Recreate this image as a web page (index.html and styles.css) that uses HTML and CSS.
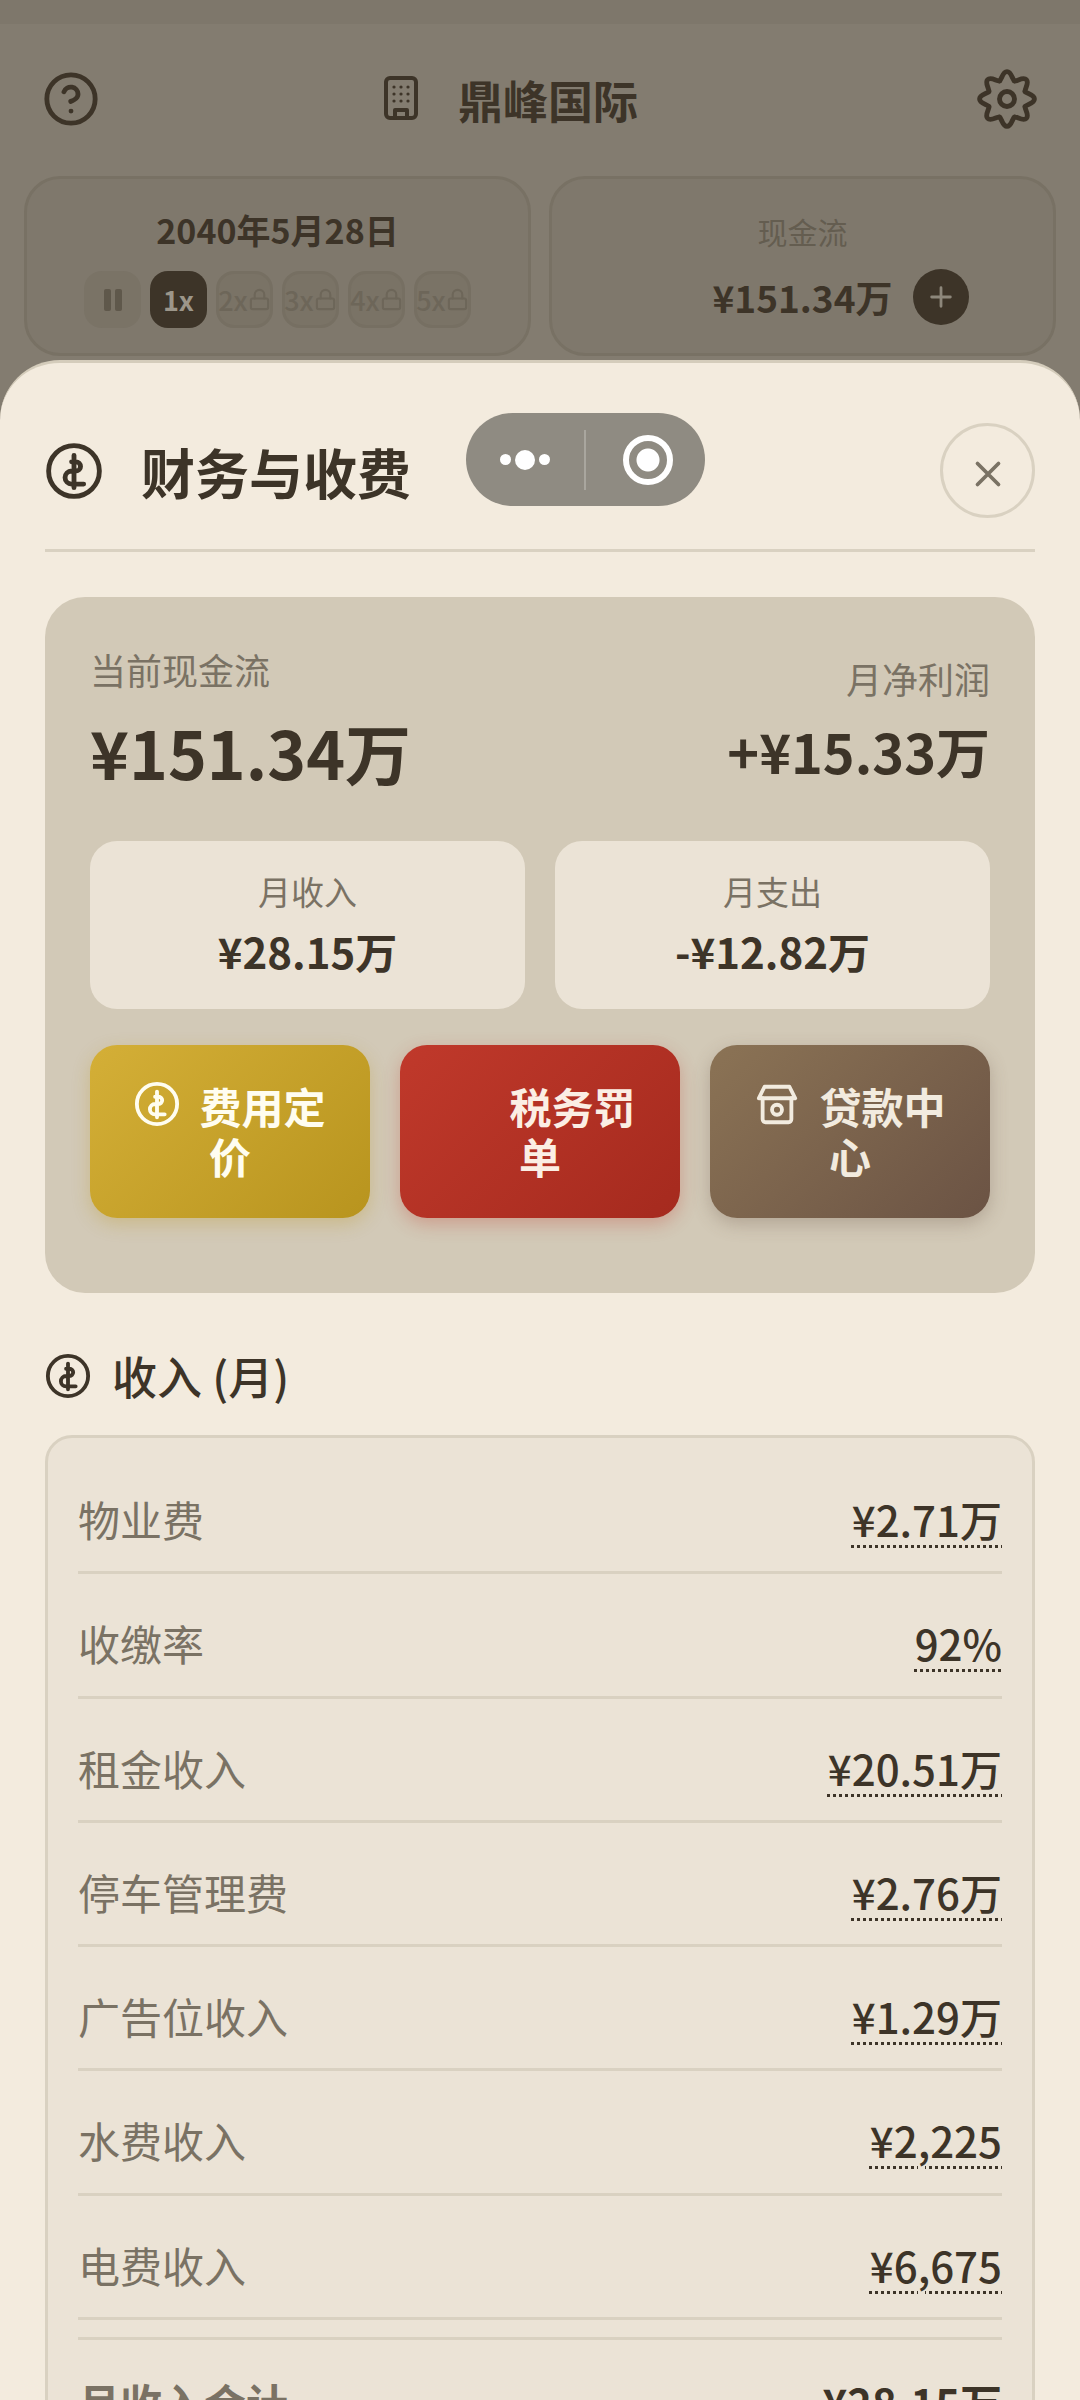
FILE: index.html
```html
<!DOCTYPE html>
<html lang="zh">
<head>
    <meta charset="UTF-8">
    <meta name="viewport" content="width=device-width, initial-scale=1.0">
    <title>鼎峰国际</title>
    <link rel="stylesheet" href="styles.css">
</head>
<body>
    <svg class="sprite" xmlns="http://www.w3.org/2000/svg">
        <symbol id="i-dollar" viewBox="0 0 24 24">
            <circle cx="12" cy="12" r="10.5"/>
            <path d="M12 5.5v13.4M11 8.2h1.8a1.9 1.9 0 0 1 0 3.8H11a2.7 2.7 0 0 0 0 5.4h5"/>
        </symbol>
        <symbol id="i-lock" viewBox="0 0 24 24">
            <rect x="3" y="11" width="18" height="11" rx="2"/>
            <path d="M7 11V7a5 5 0 0 1 10 0v4"/>
        </symbol>
        <path id="lobe" d="M9.09 4.98C9.92 4.64 10.2 1.4 12 1.4S14.08 4.64 14.91 4.98"/>
    </svg>

    <div class="statusbar"></div>

    <header class="topbar">
        <svg class="icon icon-help" viewBox="0 0 24 24">
            <circle cx="12" cy="12" r="10"/>
            <path d="M9.1 9a3 3 0 0 1 5.8 1c0 2-3 3-3 3M12 17h.01"/>
        </svg>
        <div class="topbar-title">
            <svg class="icon icon-building" viewBox="0 0 21 24">
                <rect x="3" y="2" width="15" height="20" rx="2"/>
                <path class="dots" d="M7 6.5h.01M10.5 6.5h.01M14 6.5h.01M7 10h.01M10.5 10h.01M14 10h.01M7 13.5h.01M10.5 13.5h.01M14 13.5h.01"/>
                <path d="M7.5 22v-4h6v4"/>
            </svg>
            <h1>鼎峰国际</h1>
        </div>
        <svg class="icon icon-gear" viewBox="0 0 24 24">
            <use href="#lobe"/>
            <use href="#lobe" transform="rotate(45 12 12)"/>
            <use href="#lobe" transform="rotate(90 12 12)"/>
            <use href="#lobe" transform="rotate(135 12 12)"/>
            <use href="#lobe" transform="rotate(180 12 12)"/>
            <use href="#lobe" transform="rotate(225 12 12)"/>
            <use href="#lobe" transform="rotate(270 12 12)"/>
            <use href="#lobe" transform="rotate(315 12 12)"/>
            <circle cx="12" cy="12" r="2.9"/>
        </svg>
    </header>

    <section class="top-cards">
        <div class="top-card">
            <div class="date">2040年5月28日</div>
            <div class="speeds">
                <div class="speed speed-pause"><span class="pause-bar"></span><span class="pause-bar"></span></div>
                <div class="speed speed-on">1x</div>
                <div class="speed speed-locked">2x<svg class="lock"><use href="#i-lock"/></svg></div>
                <div class="speed speed-locked">3x<svg class="lock"><use href="#i-lock"/></svg></div>
                <div class="speed speed-locked">4x<svg class="lock"><use href="#i-lock"/></svg></div>
                <div class="speed speed-locked">5x<svg class="lock"><use href="#i-lock"/></svg></div>
            </div>
        </div>
        <div class="top-card">
            <div class="cash-label">现金流</div>
            <div class="cash-row">
                <span class="cash-value">¥151.34万</span>
                <span class="cash-add"><svg viewBox="0 0 24 24"><path d="M12 4v16M4 12h16"/></svg></span>
            </div>
        </div>
    </section>

    <div class="sheet">
        <div class="sheet-head">
            <svg class="icon icon-dollar"><use href="#i-dollar"/></svg>
            <h2>财务与收费</h2>
            <div class="close">
                <svg viewBox="0 0 24 24"><path d="M3 3l18 18M21 3L3 21"/></svg>
            </div>
        </div>

        <div class="stats">
            <div class="stats-top">
                <div>
                    <div class="stats-label">当前现金流</div>
                    <div class="stats-cash">¥151.34万</div>
                </div>
                <div class="stats-right">
                    <div class="stats-label">月净利润</div>
                    <div class="stats-profit">+¥15.33万</div>
                </div>
            </div>
            <div class="minis">
                <div class="mini">
                    <div class="mini-label">月收入</div>
                    <div class="mini-value">¥28.15万</div>
                </div>
                <div class="mini">
                    <div class="mini-label">月支出</div>
                    <div class="mini-value">-¥12.82万</div>
                </div>
            </div>
            <div class="actions">
                <div class="action action-gold"><svg class="action-icon"><use href="#i-dollar"/></svg>费用定价</div>
                <div class="action action-red"><span class="action-icon"></span>税务罚单</div>
                <div class="action action-brown"><svg class="action-icon" viewBox="0 0 24 24">
                    <path d="M5.5 3h13l3 6h-19z"/>
                    <path d="M4.5 9v11a1.5 1.5 0 0 0 1.5 1.5h12a1.5 1.5 0 0 0 1.5-1.5V9"/>
                    <circle cx="12" cy="15" r="2.6"/>
                </svg>贷款中心</div>
            </div>
        </div>

        <div class="section-title">
            <svg class="icon icon-section"><use href="#i-dollar"/></svg>
            <h3>收入 (月)</h3>
        </div>

        <div class="list">
            <div class="row"><span class="row-label">物业费</span><span class="row-value">¥2.71万</span></div>
            <div class="row"><span class="row-label">收缴率</span><span class="row-value">92%</span></div>
            <div class="row"><span class="row-label">租金收入</span><span class="row-value">¥20.51万</span></div>
            <div class="row"><span class="row-label">停车管理费</span><span class="row-value">¥2.76万</span></div>
            <div class="row"><span class="row-label">广告位收入</span><span class="row-value">¥1.29万</span></div>
            <div class="row"><span class="row-label">水费收入</span><span class="row-value">¥2,225</span></div>
            <div class="row"><span class="row-label">电费收入</span><span class="row-value">¥6,675</span></div>
            <div class="row row-total"><span class="row-label">月收入合计</span><span class="row-value">¥28.15万</span></div>
        </div>
    </div>

    <!-- 小程序胶囊按钮 -->
    <div class="capsule">
        <div class="capsule-dots"><span></span><span class="big"></span><span></span></div>
        <div class="capsule-line"></div>
        <div class="capsule-ring"></div>
    </div>
</body>
</html>
```

FILE: styles.css
```css
* {
    box-sizing: border-box;
}
html, body {
    margin: 0;
    height: 2400px;
    overflow: hidden;
}
body {
    position: relative;
    background: #837c70;
    color: #3d3428;
    font-family: "Noto Sans CJK SC", "Noto Sans", sans-serif;
}
h1, h2, h3 {
    margin: 0;
}
.sprite {
    display: none;
}
.icon {
    display: block;
    flex: none;
}
svg {
    fill: none;
    stroke: currentColor;
    stroke-width: 2;
    stroke-linecap: round;
    stroke-linejoin: round;
}

/* 背景页面 */
.statusbar {
    height: 24px;
    background: #7e776b;
}
.topbar {
    height: 152px;
    padding: 0 42px;
    display: flex;
    align-items: center;
    justify-content: space-between;
}
.icon-help {
    width: 58px;
    height: 58px;
    margin-top: -2px;
}
.icon-gear {
    width: 62px;
    height: 62px;
    stroke-width: 1.9;
    margin-top: -2px;
}
.topbar-title {
    display: flex;
    align-items: center;
    gap: 36px;
    padding-right: 58px;
}
.topbar-title h1 {
    font-size: 45px;
    line-height: 60px;
    font-weight: 700;
}
.icon-building {
    width: 42px;
    height: 48px;
    margin-top: -4px;
}
.icon-building .dots {
    stroke-width: 1.6;
}
.top-cards {
    display: flex;
    gap: 18px;
    padding: 0 24px;
}
.top-card {
    flex: 1;
    height: 180px;
    border: 3px solid #787164;
    border-radius: 36px;
    background: #7f786c;
    text-align: center;
}
.date {
    margin-top: 25px;
    font-size: 34px;
    line-height: 52px;
    font-weight: 700;
}
.speeds {
    display: flex;
    justify-content: center;
    gap: 9px;
    margin-top: 15px;
}
.speed {
    width: 57px;
    height: 57px;
    border-radius: 18px;
    background: #7a7366;
    color: #6d6659;
    display: flex;
    align-items: center;
    justify-content: center;
    font-size: 27px;
    font-weight: 500;
}
.speed-on {
    background: #3d3428;
    color: #9c968a;
    font-weight: 700;
}
.speed-locked {
    border: 3px solid #766f62;
    gap: 0;
}
.pause-bar {
    width: 7px;
    height: 22px;
    margin: 0 2px;
    border-radius: 2px;
    background: #5f584b;
}
.lock {
    width: 23px;
    height: 23px;
    flex: none;
    stroke-width: 2.2;
}
.cash-label {
    margin-top: 26px;
    font-size: 30px;
    line-height: 52px;
    color: #645d50;
}
.cash-row {
    display: flex;
    align-items: center;
    justify-content: center;
    gap: 20px;
    margin-top: 12px;
    padding-left: 76px;
}
.cash-value {
    font-size: 37px;
    line-height: 56px;
    font-weight: 700;
}
.cash-add {
    width: 56px;
    height: 56px;
    border-radius: 50%;
    background: #3d3428;
    color: #8d877b;
    display: flex;
    align-items: center;
    justify-content: center;
}
.cash-add svg {
    width: 28px;
    height: 28px;
    stroke-width: 2.4;
}

/* 弹层 */
.sheet {
    position: absolute;
    top: 360px;
    left: 0;
    right: 0;
    bottom: 0;
    padding: 0 45px;
    background: #f3ebde;
    border-top: 3px solid #d4ccbb;
    border-radius: 60px 60px 0 0;
}
.sheet-head {
    display: flex;
    align-items: center;
    height: 189px;
    padding: 60px 0 31px;
    border-bottom: 3px solid #d9d1c1;
}
.icon-dollar {
    width: 58px;
    height: 58px;
    margin-right: 38px;
}
.sheet-head h2 {
    flex: 1;
    font-size: 54px;
    line-height: 72px;
    font-weight: 700;
    padding-top: 2px;
}
.close {
    width: 95px;
    height: 95px;
    border: 3px solid #d9d1c1;
    border-radius: 50%;
    display: flex;
    align-items: center;
    justify-content: center;
    color: #7a7264;
    padding-top: 6px;
}
.close svg {
    width: 28px;
    height: 28px;
    stroke-width: 3.2;
}
.stats {
    margin-top: 45px;
    height: 696px;
    padding: 45px 45px 0;
    background: #d2c9b7;
    border-radius: 40px;
}
.stats-top {
    display: flex;
    justify-content: space-between;
    align-items: flex-end;
}
.stats-right {
    text-align: right;
}
.stats-right .stats-label {
    margin-bottom: -2px;
}
.stats-label {
    font-size: 36px;
    line-height: 54px;
    color: #7a7264;
}
.stats-cash {
    font-size: 66px;
    line-height: 96px;
    font-weight: 700;
    margin-top: 7px;
}
.stats-profit {
    font-size: 54px;
    line-height: 96px;
    font-weight: 700;
}
.minis {
    display: flex;
    gap: 30px;
    margin-top: 42px;
}
.mini {
    flex: 1;
    height: 168px;
    padding-top: 26px;
    border-radius: 27px;
    background: #ebe3d6;
    text-align: center;
}
.mini-label {
    font-size: 33px;
    line-height: 48px;
    color: #7a7264;
}
.mini-value {
    margin-top: 6px;
    font-size: 42px;
    line-height: 60px;
    font-weight: 700;
}
.actions {
    display: flex;
    gap: 30px;
    margin-top: 36px;
}
.action {
    flex: 1;
    height: 173px;
    padding: 36px 30px;
    border-radius: 27px;
    text-align: center;
    font-size: 42px;
    line-height: 50px;
    font-weight: 700;
}
.action-icon {
    display: inline-block;
    width: 46px;
    height: 46px;
    margin-right: 19px;
    vertical-align: -3px;
}
.action-gold {
    background: linear-gradient(135deg, #d4af37, #b8941e);
    color: #fffdf0;
    box-shadow: 0 6px 18px rgba(184, 148, 30, 0.3);
}
.action-red {
    background: linear-gradient(135deg, #c0392b, #a52a1e);
    color: #fbeee4;
    box-shadow: 0 6px 18px rgba(192, 57, 43, 0.3);
}
.action-brown {
    background: linear-gradient(135deg, #8b7355, #6b5344);
    color: #f2ebdf;
    box-shadow: 0 6px 18px rgba(107, 83, 68, 0.3);
}
.section-title {
    display: flex;
    align-items: center;
    gap: 21px;
    height: 66px;
    margin: 50px 0 26px;
}
.icon-section {
    width: 46px;
    height: 46px;
}
.section-title h3 {
    font-size: 45px;
    line-height: 66px;
    font-weight: 500;
}
.list {
    padding: 12px 30px 0;
    border: 3px solid #d9d1c1;
    border-radius: 27px;
    background: #ebe3d6;
    height: 1000px;
}
.row {
    display: flex;
    justify-content: space-between;
    padding: 39px 0 22px;
    border-bottom: 3px solid #d9d1c1;
    font-size: 42px;
    line-height: 60.3px;
}
.row-label {
    color: #7a7264;
}
.row-value {
    font-weight: 500;
    text-decoration: underline dotted;
    text-decoration-thickness: 3px;
    text-underline-offset: 8px;
}
.row-total {
    margin-top: 17px;
    padding-top: 32px;
    border-top: 3px solid #d9d1c1;
    border-bottom: none;
}
.row-total .row-label,
.row-total .row-value {
    font-weight: 700;
    text-decoration: none;
}

/* 胶囊 */
.capsule {
    position: absolute;
    left: 466px;
    top: 413px;
    width: 239px;
    height: 93px;
    border-radius: 47px;
    background: #8f8b82;
    display: flex;
    align-items: center;
}
.capsule-dots {
    width: 118px;
    display: flex;
    align-items: center;
    justify-content: center;
    gap: 4px;
}
.capsule-dots span {
    width: 11px;
    height: 11px;
    border-radius: 50%;
    background: #fff;
}
.capsule-dots .big {
    width: 20px;
    height: 20px;
}
.capsule-line {
    width: 2px;
    height: 60px;
    background: #a9a69e;
}
.capsule-ring {
    width: 50px;
    height: 50px;
    margin-left: 37px;
    border: 6px solid #fff;
    border-radius: 50%;
    background: radial-gradient(circle, #fff 11px, transparent 12px);
}
```
